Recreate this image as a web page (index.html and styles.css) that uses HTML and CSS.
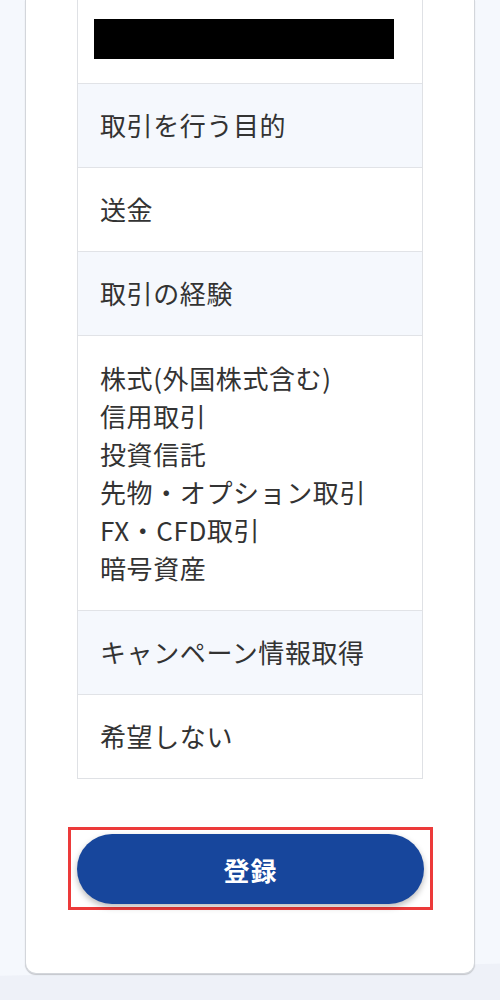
FILE: index.html
```html
<!DOCTYPE html>
<html lang="ja">
<head>
<meta charset="utf-8">
<title>確認</title>
<link rel="stylesheet" href="styles.css">
</head>
<body>
<main class="card">
  <div class="table">
    <div class="row value first"><div class="redact"></div></div>
    <div class="row head">取引を行う目的</div>
    <div class="row value">送金</div>
    <div class="row head">取引の経験</div>
    <div class="row value list">株式(外国株式含む)<br>信用取引<br>投資信託<br>先物・オプション取引<br>FX・CFD取引<br>暗号資産</div>
    <div class="row head">キャンペーン情報取得</div>
    <div class="row value">希望しない</div>
  </div>
  <div class="highlight">
    <button class="submit" type="button">登録</button>
  </div>
</main>
</body>
</html>
```
FILE: styles.css
```css
html, body {
  margin: 0;
  padding: 0;
}
body {
  width: 500px;
  height: 1000px;
  overflow: hidden;
  background: linear-gradient(178.6deg, #f5f8fd 0, #f5f8fd 975px, #eef1f8 976px, #eef1f8 100%);
  font-family: "Noto Sans CJK JP", "Noto Sans", sans-serif;
  color: #333;
}
.card {
  box-sizing: border-box;
  margin: 0 25px 0 25px;
  width: 450px;
  height: 974px;
  background: #fff;
  border: 1px solid #d3d6db;
  border-top: none;
  border-radius: 0 0 11px 11px;
  box-shadow: 0 1px 1px #c4c6cb;
  padding: 0 51px;
  display: flex;
  flex-direction: column;
}
.table {
  border-left: 1px solid #dfe1e5;
  border-right: 1px solid #dfe1e5;
  border-bottom: 1px solid #dfe1e5;
}
.row {
  box-sizing: border-box;
  padding: 22px 22px 23px;
  font-size: 26px;
  line-height: 38px;
  border-bottom: 1px solid #e1e3e7;
  letter-spacing: 0.6px;
}
.row:last-child {
  border-bottom: none;
}
.list {
  padding-top: 23px;
  padding-bottom: 23px;
}
.head {
  background: #f5f8fd;
}
.value {
  background: #fff;
}
.first {
  height: 84px;
  padding: 19px 0 0 16px;
}
.redact {
  width: 300px;
  height: 40px;
  background: #000;
}
.highlight {
  margin-top: 48px;
  margin-left: -9px;
  margin-right: -10px;
  border: 3px solid #ec3a3a;
  padding: 4px 6px 3px 6px;
}
.submit {
  display: block;
  width: 100%;
  height: 70px;
  border: none;
  border-radius: 35px;
  background: #17469c;
  color: #fff;
  font-family: "Noto Sans CJK JP", sans-serif;
  font-weight: 700;
  font-size: 26px;
  letter-spacing: 1px;
  box-shadow: 0 3px 6px rgba(0, 0, 0, 0.28);
  cursor: pointer;
}
```
